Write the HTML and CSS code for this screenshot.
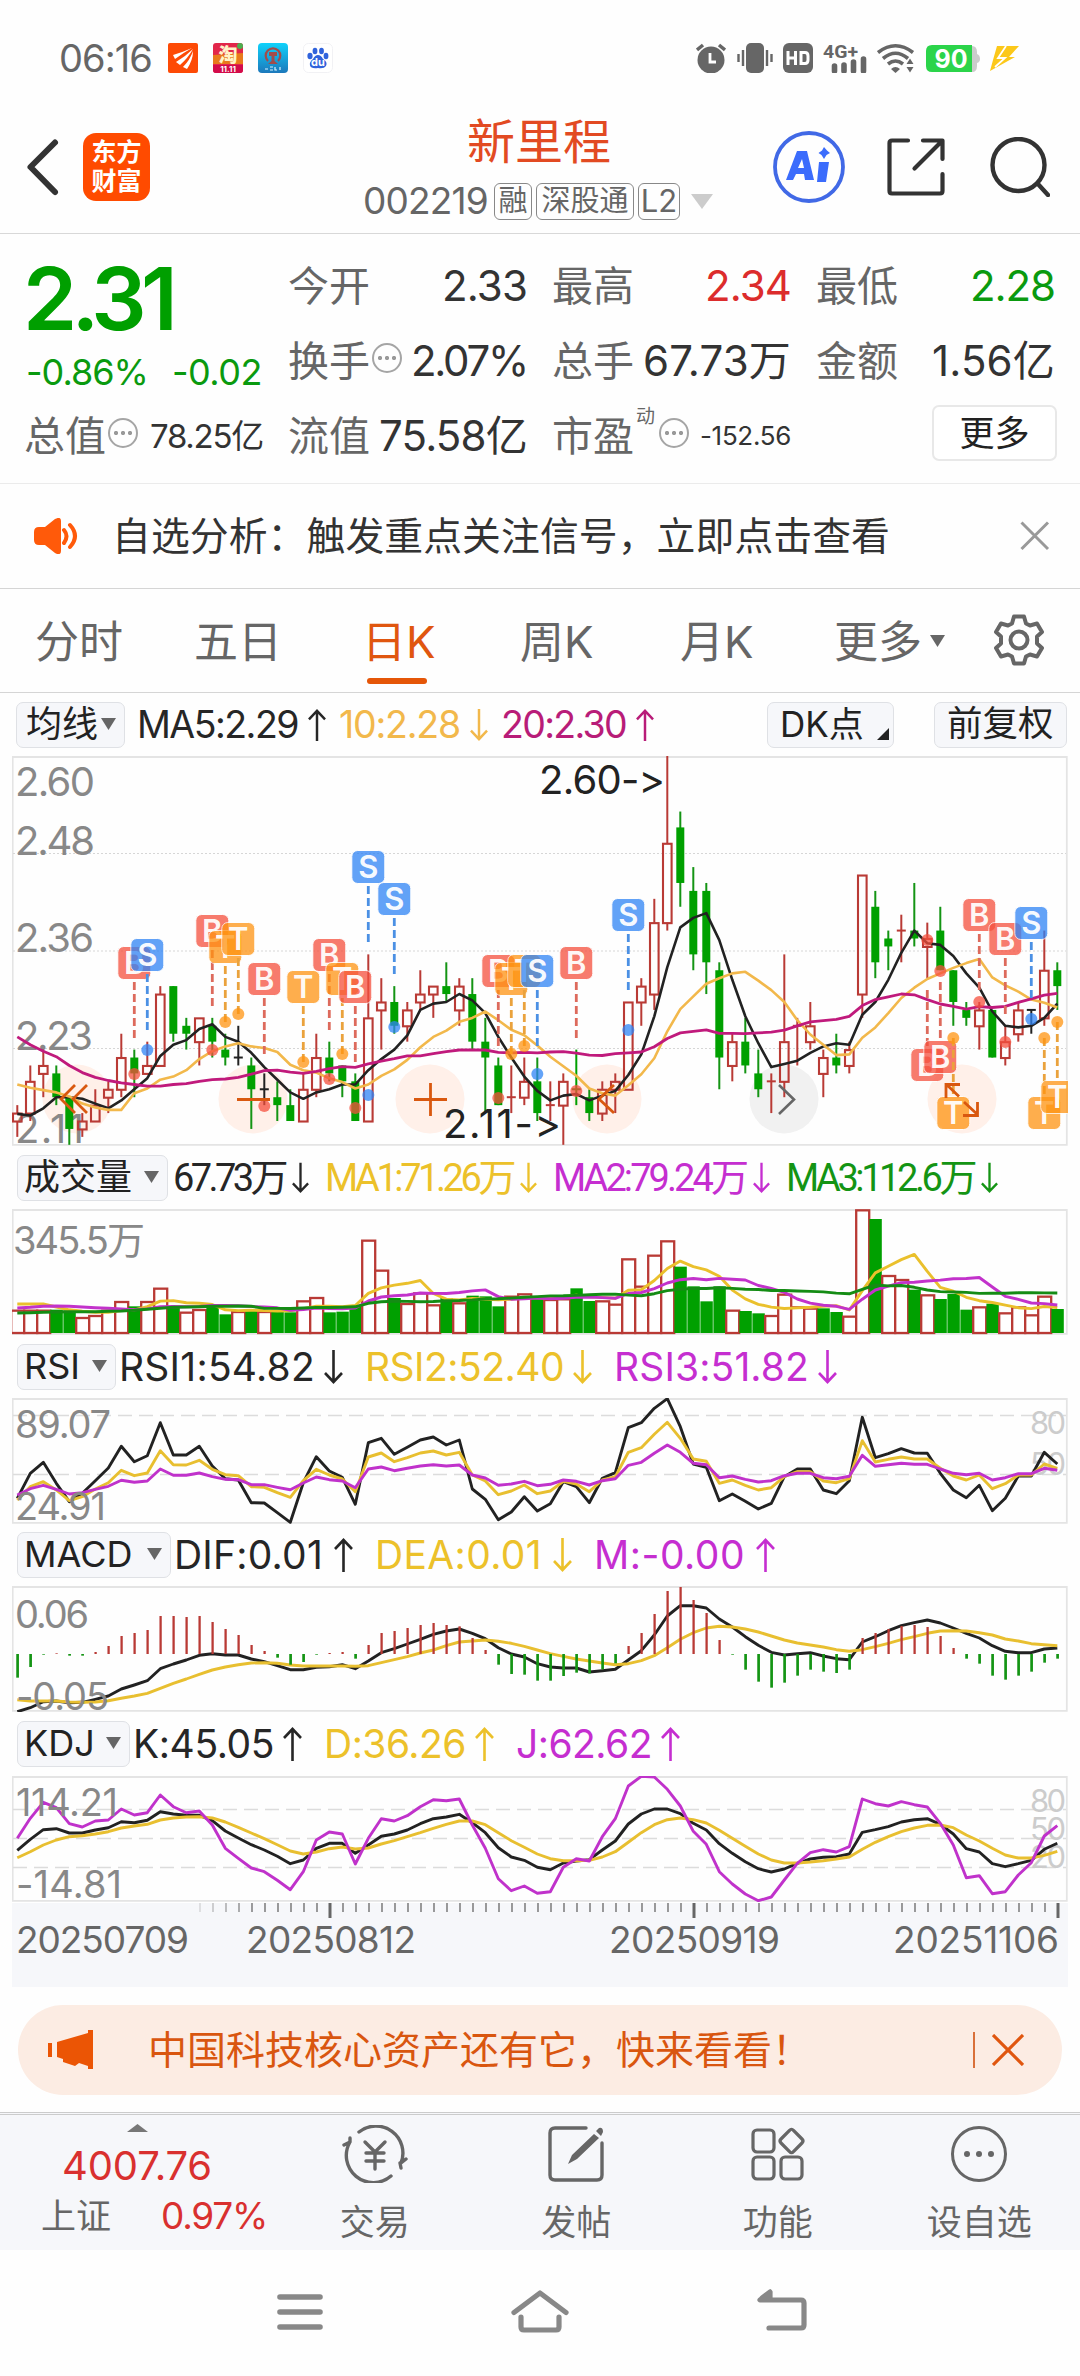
FILE: index.html
```html
<!DOCTYPE html>
<html lang="zh-CN">
<head>
<meta charset="utf-8">
<title>新里程 002219</title>
<link rel="stylesheet" href="styles.css">
</head>
<body>
<div class="status">
  <span class="time" data-w="93">06:16</span>
  <div class="apps">
    <svg width="30" height="30" viewBox="0 0 30 30"><rect width="30" height="30" rx="2" fill="#fd4a05"/><path fill="#fff" d="M5 12Q15 9 24 5Q15 10 7 16ZM8 19Q18 13 25 6Q20 15 12 22ZM15 24Q22 17 25 8Q25 17 19 26Z"/></svg>
    <svg width="30" height="30" viewBox="0 0 30 30"><rect width="30" height="30" rx="3" fill="#e2264a"/><path fill="#e87a1c" d="M0 12L30 10V21H0Z"/><circle cx="27" cy="3" r="3" fill="#4caf50"/><path fill="#d30b4a" d="M0 22H30V27Q30 30 27 30H3Q0 30 0 27Z"/><text x="15" y="19" class="ico-cjk" text-anchor="middle">淘</text><text x="15" y="29" class="ico-num" text-anchor="middle">11.11</text></svg>
    <svg width="30" height="30" viewBox="0 0 30 30"><defs><linearGradient id="rail" x2="0" y2="1"><stop stop-color="#0fd2fb"/><stop offset="1" stop-color="#1c78bb"/></linearGradient></defs><rect width="30" height="30" rx="4" fill="url(#rail)"/><path d="M10 18A7.300 7.300 0 1 1 20 18" fill="none" stroke="#a34c4a" stroke-width="2.200"/><path fill="#a34c4a" d="M11 9H19V13H16.500V18L20 21H10L13.500 18V13H11Z"/><path d="M7 26H10M12 24H15M12 27H15M17 24V27H19M22 24V27" stroke="#d8f3ff" stroke-width="1.200" fill="none"/></svg>
    <svg width="30" height="30" viewBox="0 0 30 30"><rect x=".5" y=".5" width="29" height="29" rx="5" fill="#fff" stroke="#f1f1f4"/><g fill="#3063dc"><ellipse cx="7" cy="13" rx="2.600" ry="3.300"/><ellipse cx="12" cy="8" rx="2.400" ry="3.300"/><ellipse cx="18.500" cy="8" rx="2.400" ry="3.300"/><ellipse cx="23" cy="13" rx="2.400" ry="3.200"/><path d="M15 12Q18 12 20 16Q25 19 23 23Q21 26 15 25Q8 26 7 22.500Q6 19 10 16Q12 12 15 12Z"/></g><text x="15" y="23" class="ico-du" text-anchor="middle">du</text></svg>
  </div>
  <div class="sys">
    <svg width="30" height="30" viewBox="0 0 30 30"><circle cx="15" cy="17" r="13.500" fill="#666"/><path d="M1 7L7 2M29 7L23 2" stroke="#666" stroke-width="3.500"/><path d="M14 10V19H20" fill="none" stroke="#fff" stroke-width="2.800"/></svg>
    <svg width="36" height="30" viewBox="0 0 36 30"><rect x="9" width="18" height="30" rx="5" fill="#666"/><path d="M6 7V23M30 7V23M1.500 11V19M34.500 11V19" stroke="#666" stroke-width="2.400"/></svg>
    <svg width="30" height="30" viewBox="0 0 30 30"><rect width="30" height="30" rx="6" fill="#666"/><path d="M5 8V22M12.500 8V22M5 15H12.500M18 9.500V20.500H22Q25 20.500 25 17V13Q25 9.500 22 9.500Z" fill="none" stroke="#fff" stroke-width="3"/></svg>
    <svg width="44" height="30" viewBox="0 0 44 30"><text x="0" y="14.500" class="ico-4g" textLength="35" lengthAdjust="spacingAndGlyphs">4G+</text><path d="M11.500 23V28M21 22V28M30.500 19V28M40.500 16V28" stroke="#666" stroke-width="5.600" stroke-linecap="round"/></svg>
    <svg width="38" height="30" viewBox="0 0 38 30"><g fill="none" stroke="#666" stroke-width="3.600"><path d="M1 9.500Q18.500-4 36 9.500"/><path d="M6 15.500Q18.500 5 31 15.500"/><path d="M11 21Q18.500 15 26 21"/></g><path fill="#666" d="M14 26Q18.500 22 23 26L18.500 30ZM29.500 21L33 15.500L36.500 21ZM29.500 24L33 29.500L36.500 24Z"/></svg>
    <svg width="54" height="30" viewBox="0 0 54 30"><path d="M46 3Q51 3 51 9V11Q54 12 54 16Q54 19 51 20V23Q51 29 46 29Z" fill="#ccc"/><path fill="#2bd44a" d="M6 2H46V29H6Q0 29 0 23V8Q0 2 6 2Z"/><text x="25" y="25" class="ico-batt" text-anchor="middle">90</text></svg>
    <svg width="30" height="30" viewBox="0 0 30 30"><path fill="#fcc81a" d="M7 3H29L19 14H25L0 28L3 17Z"/><path d="M16 3L8 15H15L5 24" fill="none" stroke="#fff" stroke-width="1.800"/></svg>
  </div>
</div>

<header class="top">
  <svg class="back" width="83" height="60" viewBox="0 0 83 60"><path d="M55 5.500L30.500 30L55 55" fill="none" stroke="#333" stroke-width="6" stroke-linecap="round" stroke-linejoin="round"/></svg>
  <div class="logo"><span>东方</span><span>财富</span></div>
  <div class="title">
    <h1>新里程</h1>
    <div class="code"><span class="num" data-w="125">002219</span><i>融</i><i class="w3">深股通</i><i class="w2">L2</i><svg width="22" height="15"><path d="M0 0H22L11 15Z" fill="#ccc"/></svg></div>
  </div>
  <svg class="ai" width="72" height="72" viewBox="0 0 72 72"><circle cx="36" cy="36" r="34" fill="none" stroke="#4169e6" stroke-width="3.800"/><path fill="#3b6cfc" fill-rule="evenodd" d="M24 20H34L41 49H32L31 43H23L20 49H13ZM29 28L25 37H31ZM46 31H56L53 51H44ZM51 16L54 19.500L57 22L53.500 24L51 28L48.500 24L45.500 22L49 19.500Z"/></svg>
  <svg class="share" width="58" height="58" viewBox="0 0 58 58"><g fill="none" stroke="#333" stroke-width="4.200" stroke-linecap="round" stroke-linejoin="round"><path d="M21 2.500H5Q2.500 2.500 2.500 5V53Q2.500 55.500 5 55.500H53Q55.500 55.500 55.500 53V36"/><path d="M36 2.500H55.500V21M55 3L27.500 30.500"/></g></svg>
  <svg class="search" width="60" height="60" viewBox="0 0 60 60"><g fill="none" stroke="#333" stroke-width="4.400" stroke-linecap="round"><circle cx="28.500" cy="28" r="26"/><path d="M48 47L58 58"/></g></svg>
</header>

<section class="quote">
  <div class="price">
    <b data-w="149">2.31</b>
    <div><span data-w="122">-0.86%</span><span data-w="90">-0.02</span></div>
  </div>
  <div class="cell"><label>今开</label><span data-w="85">2.33</span></div>
  <div class="cell"><label>最高</label><span class="up" data-w="86">2.34</span></div>
  <div class="cell"><label>最低</label><span class="down" data-w="85">2.28</span></div>
  <div class="cell"><label>换手</label><em></em><span data-w="116">2.07%</span></div>
  <div class="cell"><label>总手</label><span data-w="148">67.73万</span></div>
  <div class="cell"><label>金额</label><span data-w="123">1.56亿</span></div>
  <div class="cell"><label>总值</label><em></em><span class="s" data-w="113">78.25亿</span></div>
  <div class="cell"><label>流值</label><span data-w="148">75.58亿</span></div>
  <div class="cell"><label>市盈</label><sup>动</sup><em></em><span class="xs" data-w="91">-152.56</span></div>
  <button class="more">更多</button>
</section>

<section class="notice">
  <svg width="45" height="36" viewBox="0 0 45 36"><path fill="#ff5a0a" d="M5 9H11L21 1Q27-2 27 3V33Q27 38 21 35L11 27H5Q0 27 0 22V14Q0 9 5 9Z"/><path d="M30 12Q35 18 30 25M36 7Q46 18 36 29" fill="none" stroke="#ff5a0a" stroke-width="4" stroke-linecap="round"/></svg>
  <p data-w="778">自选分析：触发重点关注信号，立即点击查看</p>
  <svg width="30" height="30" viewBox="0 0 30 30"><path d="M1.500 1.500L28 28M28 1.500L1.500 28" stroke="#999" stroke-width="3"/></svg>
</section>

<nav class="tabs">
  <a>分时</a><a>五日</a><a class="on">日K</a><a>周K</a><a>月K</a><a>更多<svg width="15" height="12"><path d="M0 0H15L7.500 12Z" fill="#666"/></svg></a>
  <svg width="52" height="52" viewBox="-26 -26 52 52"><path fill="none" stroke="#666" stroke-width="4" stroke-linejoin="round" d="M-5-23.500H5L7-16.500L11-14.500L18-16.500L23-8L18-3.500V3.500L23 8L18 16.500L11 14.500L7 16.500L5 23.500H-5L-7 16.500L-11 14.500L-18 16.500L-23 8L-18 3.500V-3.500L-23-8L-18-16.500L-11-14.500L-7-16.500Z"/><circle r="8.500" fill="none" stroke="#666" stroke-width="4"/></svg>
</nav>

<main>
  <div class="legend ma">
    <button>均线<svg class="tri"><use href="#tri"/></svg></button>
    <span data-w="161">MA5:2.29</span><svg class="arr"><use href="#up"/></svg>
    <span class="c-ma10" data-w="121">10:2.28</span><svg class="arr c-ma10"><use href="#dn"/></svg>
    <span class="c-ma20" data-w="125">20:2.30</span><svg class="arr c-ma20"><use href="#up"/></svg>
    <button class="dk">DK点<svg width="12" height="12"><path d="M12 0V12H0Z" fill="#222"/></svg></button>
    <button class="fq">前复权</button>
  </div>
  <svg id="candles" class="panel" width="1056" height="390"></svg>

  <div class="legend vol">
    <button>成交量<svg class="tri"><use href="#tri"/></svg></button>
    <span data-w="112">67.73万</span><svg class="arr"><use href="#dn"/></svg>
    <span class="c-y" data-w="188">MA1:71.26万</span><svg class="arr c-y"><use href="#dn"/></svg>
    <span class="c-m" data-w="193">MA2:79.24万</span><svg class="arr c-m"><use href="#dn"/></svg>
    <span class="c-g" data-w="188">MA3:112.6万</span><svg class="arr c-g"><use href="#dn"/></svg>
  </div>
  <svg id="volume" class="panel" width="1056" height="126"></svg>

  <div class="legend rsi">
    <button>RSI<svg class="tri"><use href="#tri"/></svg></button>
    <span data-w="196">RSI1:54.82</span><svg class="arr"><use href="#dn"/></svg>
    <span class="c-y" data-w="199">RSI2:52.40</span><svg class="arr c-y"><use href="#dn"/></svg>
    <span class="c-m" data-w="195">RSI3:51.82</span><svg class="arr c-m"><use href="#dn"/></svg>
  </div>
  <svg id="rsi" class="panel" width="1056" height="126"></svg>

  <div class="legend macd">
    <button>MACD<svg class="tri"><use href="#tri"/></svg></button>
    <span data-w="149">DIF:0.01</span><svg class="arr"><use href="#up"/></svg>
    <span class="c-y" data-w="167">DEA:0.01</span><svg class="arr c-y"><use href="#dn"/></svg>
    <span class="c-m" data-w="151">M:-0.00</span><svg class="arr c-m"><use href="#up"/></svg>
  </div>
  <svg id="macd" class="panel" width="1056" height="126"></svg>

  <div class="legend kdj">
    <button>KDJ<svg class="tri"><use href="#tri"/></svg></button>
    <span data-w="141">K:45.05</span><svg class="arr"><use href="#up"/></svg>
    <span class="c-y" data-w="142">D:36.26</span><svg class="arr c-y"><use href="#up"/></svg>
    <span class="c-m" data-w="136">J:62.62</span><svg class="arr c-m"><use href="#up"/></svg>
  </div>
  <svg id="kdj" class="panel" width="1056" height="126"></svg>
  <svg id="axis" class="panel axis" width="1056" height="85"></svg>
</main>

<aside class="banner">
  <svg width="46" height="40" viewBox="0 0 46 40"><path fill="#eb5505" d="M0 13H4V27H0ZM9 12L40 3V0H45V39H40V36L31 33L27 36L15 32V29L9 27Z"/></svg>
  <p data-w="663">中国科技核心资产还有它，快来看看！</p>
  <hr>
  <svg width="32" height="32" viewBox="0 0 32 32"><path d="M1 1L31 31M31 1L1 31" stroke="#e0560f" stroke-width="3.200"/></svg>
</aside>

<footer class="bar">
  <div class="index">
    <svg width="21" height="8"><path d="M0 8H21L10.500 0Z" fill="#777"/></svg>
    <strong data-w="150">4007.76</strong>
    <div><span>上证</span><b data-w="106">0.97%</b></div>
  </div>
  <div class="item"><svg viewBox="0 0 66 58"><g fill="none" stroke="#666" stroke-width="3.400" stroke-linecap="round" stroke-linejoin="round"><path d="M17 7A27 27 0 0 1 59 38L64 34M59 43L58 38"/><path d="M49 51A27 27 0 0 1 8 17L2 20M8 17V13"/><path d="M23 17L33 27L43 17M33 27V44M24 28H42M24 36H42"/></g></svg><span>交易</span></div>
  <div class="item"><svg viewBox="0 0 66 58"><g fill="none" stroke="#666" stroke-width="3.400" stroke-linecap="round"><path d="M43 3H12Q7 3 7 8V50Q7 55 12 55H54Q59 55 59 50V18"/></g><path fill="#666" d="M51 9L56 13L34 34L25 39L29 30ZM53 6L56 3Q60 2 60 7L58 11Z"/></svg><span>发帖</span></div>
  <div class="item"><svg viewBox="0 0 66 58"><g fill="none" stroke="#666" stroke-width="3.200"><rect x="8" y="5" width="21" height="22" rx="4"/><rect x="8" y="32" width="21" height="22" rx="4"/><rect x="36" y="32" width="21" height="22" rx="4"/><path d="M44.500 5.500Q46.500 3 48.500 5.500L57 14Q59 16 57 18L48.500 26.500Q46.500 29 44.500 26.500L36 18Q34 16 36 14Z"/></g></svg><span>功能</span></div>
  <div class="item"><svg viewBox="0 0 66 58"><circle cx="33" cy="29" r="26.500" fill="none" stroke="#666" stroke-width="3"/><g fill="#666"><circle cx="21" cy="29" r="3"/><circle cx="33" cy="29" r="3"/><circle cx="45" cy="29" r="3"/></g></svg><span>设自选</span></div>
</footer>
<div class="sysnav">
  <svg width="46" height="46" viewBox="0 0 46 46"><path d="M3 8H43M3 23H43M3 38H43" stroke="#888" stroke-width="5.600" stroke-linecap="round"/></svg>
  <svg width="60" height="46" viewBox="0 0 60 46"><g fill="none" stroke="#888" stroke-width="5.200" stroke-linecap="round" stroke-linejoin="round"><path d="M4 23.500L30 4L56 23.500"/><path d="M11 28V38Q11 41 14 41H46Q49 41 49 38V28"/></g></svg>
  <svg width="50" height="46" viewBox="0 0 50 46"><path d="M13 3L3 11H44Q47 11 47 14V36Q47 39 44 39H12M5 9L13 3V10" fill="none" stroke="#888" stroke-width="5.200" stroke-linecap="round" stroke-linejoin="round"/></svg>
</div>

<svg class="defs" width="0" height="0">
  <symbol id="tri" viewBox="0 0 15 12"><path d="M0 0H15L7.500 12Z" fill="#666"/></symbol>
  <symbol id="up" viewBox="0 0 19 34"><path d="M9.500 34V2M1 11L9.500 2L18 11" fill="none" stroke="currentColor" stroke-width="2.600"/></symbol>
  <symbol id="dn" viewBox="0 0 19 34"><path d="M9.500 0V32M1 23L9.500 32L18 23" fill="none" stroke="currentColor" stroke-width="2.600"/></symbol>
</svg>
<script src="chart.js"></script>
</body>
</html>
```
FILE: styles.css
```css
* { box-sizing: border-box; }
body {
  margin: 0; width: 1080px; height: 2376px; background: #fefefe; color: #222;
  font-family: Inter, "Noto Sans CJK SC", sans-serif;
  font-feature-settings: "calt" 0;
  display: flex; flex-direction: column; overflow: hidden;
}
p, h1 { margin: 0; font-weight: 400; }
i, em { font-style: normal; }
svg { display: block; flex: none; }
span, b, strong, p, button, label { white-space: nowrap; }
.defs { display: none; }

.status { height: 80px; padding: 36px 60px 0 59px; display: flex; align-items: center; color: #666; }
.time { width: 93px; margin-right: 16px; font-size: 38px; line-height: 44px; }
.apps { display: flex; gap: 15px; }
.sys { display: flex; align-items: center; gap: 10.300px; margin-left: auto; }
.ico-cjk { font: 900 19px "Noto Sans CJK SC", sans-serif; fill: #fff3c8; }
.ico-num { font: 700 8px Inter, sans-serif; fill: #fff; }
.ico-du { font: 700 11px Inter, sans-serif; fill: #fff; }
.ico-4g { font: 700 19px Roboto, sans-serif; fill: #666; }
.ico-batt { font: 700 25px Inter, sans-serif; fill: #fff; }

.top {
  height: 154px; padding-top: 20px; border-bottom: 1px solid #d8d8d8; align-items: center;
  display: grid; grid-template-columns: 83px 67px 213px 352px 58px 72px 42px 58px 45px 60px;
}
.logo { width: 67px; height: 68px; border-radius: 13px; background: #ff4b00; color: #fff; display: flex; flex-direction: column; justify-content: center; align-items: center; font-size: 25px; font-weight: 700; line-height: 29px; }
.title { grid-column: 4; align-self: start; display: flex; flex-direction: column; }
.title h1 { margin-top: 17px; font-size: 48px; line-height: 50px; text-align: center; color: #e24a22; }
.code { display: flex; align-items: center; margin-top: 15px; height: 38px; color: #666; font-size: 37px; line-height: 38px; }
.code .num { width: 131px; }
.code i { width: 38px; height: 37px; border: 1.500px solid #888; border-radius: 6px; margin-right: 4px; font-size: 29px; line-height: 34px; text-align: center; }
.code i.w3 { width: 98px; }
.code i.w2 { width: 42px; margin-right: 11px; font-size: 31px; }
.ai { grid-column: 6; }
.share { grid-column: 8; }
.search { grid-column: 10; }

.quote {
  height: 250px; padding: 14px 0 0 26px; border-bottom: 1px solid #ebebeb;
  display: grid; grid-template: repeat(3, 75px) / repeat(4, 236px); column-gap: 28px;
}
.price { grid-row: span 2; color: #0a9a0f; padding-top: 19px; }
.price b { display: block; margin-left: -3px; font-size: 87px; font-weight: 600; line-height: 64px; color: #009f00; }
.price div { display: flex; justify-content: space-between; margin-top: 26px; font-size: 36px; line-height: 30px; }
.cell { display: flex; align-items: center; color: #333; font-size: 42px; line-height: 50px; }
.cell label { margin-left: -2px; font-size: 41px; color: #666; }
.cell span { margin-left: auto; margin-right: -1px; }
.cell .s { font-size: 33px; }
.cell .xs { font-size: 26px; }
.cell sup { font-size: 19px; line-height: 20px; color: #666; margin: -38px 2px 0 2px; }
.cell em { width: 30px; height: 30px; border: 2.500px solid #a5a5a5; border-radius: 50%; margin: -6px 0 0 2px; background: radial-gradient(circle, #999 1.800px, transparent 2.400px) center / 8px 8px no-repeat, radial-gradient(circle, #999 1.800px, transparent 2.400px) 2px center / 8px 8px no-repeat, radial-gradient(circle, #999 1.800px, transparent 2.400px) 16px center / 8px 8px no-repeat; }
.up { color: #dc2c2c; }
.down { color: #0a9a0f; }
.more { justify-self: end; width: 125px; height: 56px; align-self: start; margin-top: 7px; margin-right: -3px; padding: 0; border: 2px solid #e8e8e8; border-radius: 7px; background: #fff; font: 35px/50px Inter, "Noto Sans CJK SC", sans-serif; color: #222; }

.notice { height: 105px; padding: 0 30px 0 34px; border-bottom: 1px solid #d5d5d5; display: flex; align-items: center; }
.notice p { margin-left: 33px; margin-right: auto; font-size: 38.800px; line-height: 50px; color: #333; }

.tabs { height: 104px; padding: 4px 0 0 35px; border-bottom: 1px solid #d5d5d5; display: grid; grid-template-columns: 159px 170px 156px 160px 154px 159px 60px; align-items: center; color: #666; font-size: 44px; line-height: 99px; }
.tabs a { position: relative; display: flex; align-items: center; gap: 8px; }
.tabs a svg { margin-top: -4px; }
.tabs > svg { margin-top: -6px; }
.tabs .on { color: #e0560f; margin-left: -2px; }
.tabs .on::after { content: ""; position: absolute; left: 5px; bottom: 8px; width: 60px; height: 6px; border-radius: 3px; background: #e55608; }

main { padding: 0 12px; }
.legend { height: 63px; padding: 0; display: flex; align-items: center; font-size: 37.500px; line-height: 46px; color: #262626; }
.legend button { height: 46px; margin: 0 0 0 5px; padding: 0 0 2px 6px; border: 1.500px solid #dfe1e5; border-radius: 7px; background: #f6f7fa; color: #222; font: 36px/42px Inter, "Noto Sans CJK SC", sans-serif; text-align: left; display: flex; align-items: center; justify-content: space-between; }
.tri { width: 15px; height: 12px; margin: 0 8px 0 0; }
.arr { width: 19px; height: 34px; }
.legend span { flex: none; }
.ma button { width: 109px; margin-left: 4px; padding-left: 9px; }
.ma span { margin-left: 12px; }
.ma .arr { margin-left: 10px; width: 18px; }
.ma span ~ span { margin-left: 13px; }
.ma .dk { width: 127px; margin-left: 113px; padding-left: 12px; font-size: 35px; }
.ma .dk svg { margin: 20px 4px 0 0; }
.ma .fq { width: 133px; margin-left: 40px; padding-left: 12px; font-size: 35.500px; }
.vol button { width: 151px; }
.vol span { margin-left: 5px; font-family: Roboto, "Noto Sans CJK SC", sans-serif; font-size: 38px; }
.vol .arr { width: 17px; margin-left: 7px; }
.vol span ~ span { margin-left: 16px; }
.rsi button { width: 99px; }
.macd { height: 62px; }
.macd button { width: 154px; }
.kdj { height: 64px; }
.kdj button { width: 113px; }
.rsi button, .macd button, .kdj button { font-size: 36px; }
.rsi span, .macd span, .kdj span { margin-left: 3px; font-size: 39px; }
.rsi .arr, .macd .arr, .kdj .arr { margin-left: 9px; }
.macd .arr { margin-left: 11px; }
.rsi span ~ span, .macd span ~ span, .kdj span ~ span { margin-left: 22px; }
.c-ma10 { color: #f2b84b; }
.c-ma20 { color: #b81c78; }
.c-y { color: #ecc12a; }
.c-m { color: #c52ed0; }
.c-g { color: #149414; }
.panel { overflow: hidden; }
.axis { background: #f6f7fa; }
.lab { font-family: Inter, "Noto Sans CJK SC", sans-serif; }
.badge { font: 600 31px Inter, sans-serif; fill: #fff; text-anchor: middle; }

.banner { flex: none; width: 1044px; height: 90px; margin: 18px auto 17px; padding: 0 38px 0 30px; border-radius: 45px; background: #fcece3; display: flex; align-items: center; color: #d9560f; }
.banner p { margin-left: 54px; font-size: 39px; line-height: 50px; width: 663px; }
.banner hr { width: 2px; height: 36px; margin: 0 17px 0 auto; border: 0; background: #d9703a; }

.bar { flex: none; height: 138px; border-top: 3px double #ccc; background: #f6f7fa; display: grid; grid-template-columns: 274px repeat(4, 201.500px); }
.index { padding-top: 9px; }
.index svg { margin-left: 127px; }
.index strong { display: block; margin: 15px 0 0 62px; font-size: 40px; font-weight: 400; line-height: 37px; color: #d9302f; }
.index div { display: flex; margin: 13px 0 0 41px; font-size: 35px; line-height: 38px; color: #666; }
.index b { font-weight: 400; font-size: 37px; color: #d9302f; margin-left: 50px; }
.item { display: flex; flex-direction: column; align-items: center; color: #666; font-size: 35px; line-height: 40px; }
.item svg { width: 66px; height: 58px; margin: 10px 0 19px; }

.sysnav { height: 126px; padding: 39px 0 0 277px; display: flex; }
.sysnav svg + svg { margin-left: 187px; }
```
FILE: chart.js
```js
const FONT_GREY = '#888', GREEN = '#00a000', RED = '#b93a35', BLACK = '#222';
const PITCH = 13, X0 = 5.3;
const cx = i => X0 + PITCH * i;
const $ = id => document.getElementById(id);
const line = (x1, y1, x2, y2, c, w, extra = '') =>
  `<line x1="${x1}" y1="${y1}" x2="${x2}" y2="${y2}" stroke="${c}" stroke-width="${w}" ${extra}/>`;
const poly = (ys, c, w = 2.9) =>
  `<polyline points="${ys.map((y, i) => cx(i).toFixed(1) + ',' + y.toFixed(1)).join(' ')}" fill="none" stroke="${c}" stroke-width="${w}" stroke-linejoin="round"/>`;
const label = (t, x, y, w, size, c = FONT_GREY) =>
  `<text class="lab" x="${x}" y="${y}" font-size="${size}" fill="${c}" textLength="${w}">${t}</text>`;
const frame = h => `<path d="M.7 1H1054.800V${h - 1.2}H.7Z" fill="none" stroke="#e4e4e4" stroke-width="1.800"/>`;
const dash = y => line(1, y, 1054, y, '#dcdcdc', 1.3, 'stroke-dasharray="14 7"');

// Moving average; `lead` covers the days whose window starts before the first bar.
function average(values, n, lead) {
  return values.map((v, i) => i < n - 1 ? lead[i]
    : values.slice(i - n + 1, i + 1).reduce((a, b) => a + b) / n);
}

// high, body top, body bottom, low (ticks of 0.01 below 2.60), colour
const days = `44 45 46 48 r|39 41 45 46 r|37 39 40 43 r|39 40 43 44 g|43 43 47 49 g|45 46 47 48 r|42 44 46 46 r|41 42 43 45 r|35 38 42 43 r|37 38 40 43 g
36 39 40 40 r|29 30 39 39 r|29 29 35 36 g|33 34 35 37 g|33 33 36 39 r|33 34 36 38 g|35 37 38 39 g|34 38 38 39 k|38 39 42 47 g|40 42 42 44 k
41 43 44 46 g|42 44 46 46 g|40 42 46 46 r|35 38 42 43 r|36 38 40 41 g|39 39 41 43 g|40 41 46 46 g|25 33 46 46 r|28 31 32 37 r|29 31 34 35 g
31 32 34 36 r|27 30 31 32 r|29 29 30 33 r|26 29 30 31 g|28 29 32 34 r|28 30 36 37 g|33 36 38 45 g|38 39 44 44 g|39 43 43 45 r|38 41 43 44 r
38 41 45 46 g|41 44 44 46 r|40 41 44 49 r|37 42 42 44 g|42 43 45 46 g|41 42 45 46 r|40 41 42 45 r|31 31 42 42 r|28 29 31 34 r|18 21 30 32 r
0 11 21 22 r|7 9 16 19 g|14 17 25 27 g|16 17 26 30 g|26 27 38 42 g|35 36 39 41 r|33 36 39 40 g|37 40 42 43 g|40 41 41 45 r|25 36 41 43 r
33 34 34 39 r|31 34 36 37 r|37 38 40 43 r|35 38 39 40 g|36 37 39 40 r|15 15 30 33 r|17 19 26 28 g|22 23 24 27 g|20 22 22 26 r|16 22 23 24 g
21 23 24 28 r|19 22 27 27 g|27 27 31 34 g|31 32 33 34 g|31 32 34 37 r|32 32 38 38 g|34 36 38 39 r|31 32 35 36 r|32 32 32 35 k|22 27 33 34 r
26 27 29 32 g`.split(/[|\n]/).map(s => { const p = s.split(' '); return { h: +p[0], t: +p[1], b: +p[2], l: +p[3], c: p[4] }; });

const TICK = 7.935;
const py = t => t * TICK;

const signals = [['B', 9, 207, 318], ['S', 10, 199, 294], ['B', 15, 175, 294], ['T', 16, 191, 266], ['T', 17, 183, 258],
  ['B', 19, 223, 350], ['T', 22, 231, 306], ['B', 24, 199, 323], ['T', 25, 223, 298], ['B', 26, 231, 352],
  ['S', 27, 111, 339], ['S', 29, 143, 271], ['B', 37, 215, 342], ['T', 38, 223, 298], ['T', 39, 215, 290],
  ['S', 40, 215, 318], ['B', 43, 207, 335], ['S', 47, 159, 274], ['B', 70, 309, 184, 1], ['B', 71, 301, 215, 1],
  ['T', 72, 357, 282, 1], ['B', 74, 159, 246], ['B', 76, 183, 286], ['S', 78, 167, 263], ['T', 79, 357, 282, 1], ['T', 80, 341, 266, 1]];
const SIGNAL = { B: '#f5503d', S: '#2f84f5', T: '#ff9412' };
const STEM = { B: '#dd6a5c', S: '#4b90e4', T: '#eaa23c' };

function drawCandles() {
  let s = frame(390);
  [97.5, 195, 292.5].forEach(y => s += line(1, y, 1054, y, '#d6d6d6', 1, 'stroke-dasharray="2 2"'));
  [65, 241, 418, 595, 950].forEach(x => s += `<circle cx="${x}" cy="343" r="34.500" fill="#fff0e9"/>`);
  s += '<circle cx="772" cy="343" r="34.500" fill="#f1f1f1"/>';
  s += label('2.60', 3, 40, 80, 40) + label('2.48', 3, 99, 80, 40) + label('2.36', 3, 196, 79, 40)
    + label('2.23', 3, 294, 78, 40) + label('2.11', 3, 387, 69, 40);
  days.forEach((d, i) => {
    const x = cx(i), col = { r: RED, g: GREEN, k: BLACK }[d.c];
    if (d.t === d.b) {
      s += line(x, py(d.h), x, py(d.l), col, 2) + line(x - 4.5, py(d.t), x + 4.500, py(d.t), col, 2);
    } else if (d.c === 'g') {
      s += line(x, py(d.h), x, py(d.l), '#149414', 2) + `<rect x="${x - 4}" y="${py(d.t)}" width="8" height="${py(d.b) - py(d.t)}" fill="${col}"/>`;
    } else {
      s += line(x, py(d.h), x, py(d.t), col, 2) + line(x, py(d.b), x, py(d.l), col, 2)
        + `<rect x="${x - 4.300}" y="${py(d.t) + .5}" width="8.600" height="${py(d.b) - py(d.t)}" fill="none" stroke="${col}" stroke-width="2.100"/>`;
    }
  });
  const close = days.map(d => 260 - (d.c === 'g' ? d.b : d.t));
  const toY = v => py(260 - v);
  s += poly(average(close, 5, [214.9, 214.7, 215.6, 217]).map(toY), BLACK, 2.6);
  s += poly(average(close, 10, [218.6, 218.2, 217.9, 217.6, 217.1, 216.2, 215.7, 215.4, 215.4]).map(toY), '#f2b84b', 2.6);
  s += poly(average(close, 20, [224.6, 223.6, 222.8, 222.1, 221, 220.1, 219.5, 219.1, 218.8, 218.6, 218.4, 218.4, 218.6, 218.7, 219, 219.2, 219.3, 219.5, 219.9]).map(toY), '#c01a7c', 2.8);
  signals.forEach(([k, i, y, dot, below]) => {
    const x = cx(i);
    s += below ? line(x, y - 75, x, y - 17, STEM[k], 2.800, 'stroke-dasharray="8 4"')
      : line(x, y + 19, x, y + 75, STEM[k], 2.800, 'stroke-dasharray="8 4"');
    s += `<circle cx="${x}" cy="${dot}" r="6" fill="${SIGNAL[k]}" opacity=".75"/>`;
    s += `<g><rect x="${x - 16.500}" y="${y - 16.500}" width="33" height="33" rx="6" fill="${SIGNAL[k]}" opacity=".75" stroke="#fff" stroke-width="1"/><text class="badge" x="${x}" y="${y + 11}" fill-opacity=".95">${k}</text></g>`;
  });
  s += `<g fill="none" stroke="#d9580f" stroke-width="2.800">
    <path d="M63 329L49 343L63 357M75 329L61 343L75 357"/><path d="M225 343.500H258"/><path d="M402 343.500H435M418.500 327V360"/>
    <path d="M602 329L587 343L602 357"/><path d="M934 342V328.500H948M934 328L947 340.500M952 346L966 359M951 359.500H965.500V346"/></g>
    <path d="M767 329L782 343.500L767 358" fill="none" stroke="#666" stroke-width="2.600"/>`;
  s += label('2.60-&gt;', 527, 38, 126, 40, BLACK) + label('2.11-&gt;', 431, 382, 118, 40, BLACK);
  $('candles').innerHTML = s;
}

// Daily volume, 372 = 345.5万; a minus sign marks a falling day.
const vols = [70,70,70,-70,-68,48,54,70,96,-80,96,136,-78,64,72,-78,-56,66,-70,66,-70,-62,98,108,-62,-64,-80,280,190,-105,90,122,86,-105,92,-112,-110,-80,112,119,-108,102,104,-134,-96,98,88,224,142,235,278,-199,-140,-95,-140,70,-66,-59,54,118,80,76,-74,-63,52,371,-342,174,162,-130,116,-102,-117,-70,80,-88,62,80,56,112,-72];
function drawVolume() {
  const y = v => 124 - v / 3;
  let s = frame(126);
  vols.forEach((v, i) => {
    const x = cx(i) + .4, t = y(Math.abs(v));
    s += v < 0 ? `<rect x="${x - 6.300}" y="${t}" width="12.400" height="${124 - t}" fill="${GREEN}"/>`
      : `<rect x="${x - 6.500}" y="${t + 1}" width="13" height="${123 - t}" fill="#fff" stroke="${RED}" stroke-width="2.300"/>`;
  });
  const a = vols.map(Math.abs);
  s += poly(average(a, 5, [87, 87, 87, 78]).map(y), '#eac02c');
  s += poly(average(a, 10, [75, 77, 80, 81, 80, 78, 76, 74, 72]).map(y), '#c232cb');
  s += poly(average(a, 20, [60, 61, 62, 63, 64, 64, 64, 65, 66, 68, 71, 74, 77, 78, 79, 80, 80, 81, 80]).map(y), '#148c14');
  s += label('345.5万', 1, 45, 132, 38);
  $('volume').innerHTML = s;
}

// Indicator levels are stored in thirds of a pixel, counted down from each panel's origin.
const rsi = [
  [925,850,817,880,935,910,872,834,769,815,797,698,795,795,769,828,866,870,938,939,968,997,878,800,843,862,943,758,745,793,772,750,741,765,750,897,928,989,966,920,963,941,875,890,938,865,848,713,698,655,626,710,822,832,932,912,934,957,940,860,837,837,900,911,872,682,803,791,776,789,790,850,900,923,886,962,925,858,858,787,822],
  [930,890,875,900,932,920,897,878,841,857,849,782,824,825,811,838,854,857,890,892,908,922,872,838,855,867,905,801,789,815,803,789,783,795,787,855,873,914,903,885,911,903,874,882,905,870,860,787,773,733,697,745,807,814,880,870,886,900,893,860,845,845,873,878,866,752,816,808,801,807,807,835,858,870,855,896,881,855,855,822,835],
  [915,896,886,898,912,908,898,889,871,877,873,837,856,856,849,860,868,869,884,884,892,899,879,861,869,873,893,837,831,842,835,828,824,828,825,855,864,886,882,874,887,883,870,874,885,872,866,826,817,790,765,787,820,824,863,858,868,876,872,857,850,850,863,866,859,796,829,824,820,823,823,837,850,854,850,870,863,851,851,835,841]];
const hist = [293,261,224,220,227,227,216,198,168,159,150,108,108,111,108,126,147,165,195,213,233,254,246,224,219,216,236,195,159,153,144,135,129,135,139,174,210,254,282,284,302,302,288,278,280,268,250,198,159,102,33,21,60,99,180,224,269,305,323,308,287,269,275,279,269,174,159,147,138,135,141,168,204,236,251,287,299,287,275,248,236];
const macd = [
  [395,383,365,363,368,367,358,348,327,315,302,266,252,240,226,221,225,225,237,245,257,269,269,262,260,254,266,243,218,206,192,178,163,153,147,160,176,203,222,231,251,261,264,264,276,272,268,240,212,165,108,77,77,84,117,141,170,196,217,225,221,218,228,236,239,186,170,152,137,128,120,129,144,160,174,197,214,218,218,207,204],
  [359,363,363,363,366,367,366,362,355,348,340,325,310,297,283,270,261,254,249,248,250,255,258,258,258,258,259,257,248,239,230,219,210,197,186,183,180,184,190,199,210,221,229,237,243,249,254,251,242,227,203,178,158,144,139,141,147,156,168,180,189,195,201,209,214,209,200,190,179,170,160,153,152,153,158,165,177,183,191,194,197]];
const kdj = [
  [811,778,749,746,759,759,750,743,725,728,721,695,702,706,706,722,753,774,794,810,829,851,840,805,790,790,820,795,769,762,750,731,716,711,703,728,758,803,831,841,862,869,849,843,839,810,783,732,702,687,687,701,730,750,791,820,845,866,876,867,850,837,832,830,822,757,749,740,726,719,716,733,762,806,816,851,860,851,841,808,790],
  [833,815,795,780,770,767,762,755,744,738,733,720,714,711,710,714,726,742,759,776,794,813,822,816,806,801,807,804,792,782,770,758,745,733,723,723,734,758,782,802,822,836,842,842,841,831,815,787,758,734,719,714,719,729,751,775,799,822,840,849,849,846,842,837,831,808,787,770,755,744,736,735,743,765,783,805,825,834,834,826,814],
  [775,715,667,683,731,741,723,720,687,705,698,645,680,698,693,735,805,835,864,875,901,929,875,780,756,762,852,775,716,723,707,680,659,662,657,735,805,896,932,918,940,935,862,836,843,770,716,618,589,591,628,678,754,793,875,912,942,962,951,900,850,818,809,816,800,657,671,678,665,674,681,730,795,893,887,941,935,885,848,768,737]];
const COLORS = [BLACK, '#e8bf30', '#c032cb'];
const curves = (sets, origin) => sets.map((v, k) => poly(v.map(n => (n - origin) / 3), COLORS[k])).join('');

function drawIndicators() {
  $('rsi').innerHTML = frame(126) + dash(17.5) + dash(76.5)
    + label('80', 1018, 36, 36, 31, '#ccc') + label('50', 1018, 77, 36, 31, '#ccc')
    + curves(rsi, 624) + label('89.07', 3, 40, 96, 38) + label('24.91', 3, 122, 91, 38);

  let bars = '';
  hist.forEach((v, i) => {
    const y = (v - 18) / 3;
    bars += line(cx(i) + .3, 68, cx(i) + .3, y, v < 222 ? RED : '#149414', v < 222 ? 2.3 : 2.700);
  });
  $('macd').innerHTML = frame(126) + curves(macd, 18) + bars
    + label('0.06', 3, 42, 74, 38) + label('-0.05', 4, 124, 93, 38);

  $('kdj').innerHTML = frame(126) + dash(33.5) + dash(62.5) + dash(91.5)
    + label('80', 1018, 36, 36, 31, '#ccc') + label('50', 1018, 64, 36, 31, '#ccc') + label('20', 1018, 92, 36, 31, '#ccc')
    + curves(kdj, 588) + label('114.21', 4, 40, 102, 38) + label('-14.81', 4, 122, 106, 38);
}

function drawAxis() {
  let s = '<path d="M0 0H1056" stroke="#fff" stroke-width="2"/>';
  for (let i = 14; i <= 80; i++) {
    const major = i === 24 || i === 52 || i === 80;
    const x = cx(i) + .7;
    s += line(x, 1, x, major ? 16 : 10, '#666', major ? 3 : 1.3, `opacity="${Math.min(1, .25 + (i - 14) * .18)}"`);
  }
  s += label('20250709', 4, 51, 173, 37, '#666') + label('20250812', 234, 51, 170, 37, '#666')
    + label('20250919', 597, 51, 171, 37, '#666') + label('20251106', 881, 51, 166, 37, '#666');
  $('axis').innerHTML = s;
}

function fitLabels() {
  document.querySelectorAll('[data-w]').forEach(el => {
    const range = document.createRange();
    range.selectNodeContents(el);
    const natural = range.getBoundingClientRect().width;
    el.style.letterSpacing = ((+el.dataset.w - natural) / el.textContent.length).toFixed(3) + 'px';
  });
}

drawCandles();
drawVolume();
drawIndicators();
drawAxis();
fitLabels();
```
